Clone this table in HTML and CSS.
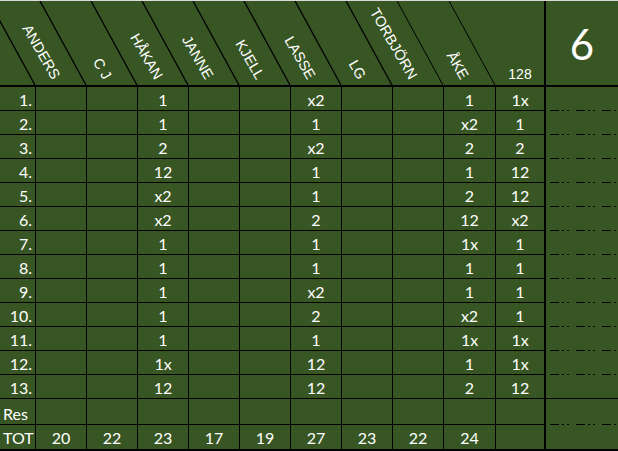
FILE: index.html
```html
<!DOCTYPE html>
<html>
<head>
<meta charset="utf-8">
<link rel="stylesheet" href="styles.css">
</head>
<body>
<div class="sheet">
  <div class="head">
    <div class="hc blank"></div>
    <div class="hc"><span class="anc"><span class="nm">ANDERS</span></span></div>
    <div class="hc"><span class="anc"><span class="nm">C J</span></span></div>
    <div class="hc"><span class="anc"><span class="nm">HÅKAN</span></span></div>
    <div class="hc"><span class="anc"><span class="nm">JANNE</span></span></div>
    <div class="hc"><span class="anc"><span class="nm">KJELL</span></span></div>
    <div class="hc"><span class="anc"><span class="nm">LASSE</span></span></div>
    <div class="hc"><span class="anc"><span class="nm">LG</span></span></div>
    <div class="hc"><span class="anc"><span class="nm">TORBJÖRN</span></span></div>
    <div class="hc"><span class="anc"><span class="nm">ÅKE</span></span></div>
    <div class="hc h128">128</div>
    <div class="hc round">6</div>
    <svg class="diag" width="618" height="85" viewBox="0 0 618 85">
      <g stroke="#000" stroke-width="1.3">
        <line x1="35.5" y1="85" x2="-11.5" y2="-1"/>
        <line x1="86.5" y1="85" x2="39.5" y2="-1"/>
        <line x1="137.5" y1="85" x2="90.5" y2="-1"/>
        <line x1="188.5" y1="85" x2="141.5" y2="-1"/>
        <line x1="239.5" y1="85" x2="192.5" y2="-1"/>
        <line x1="290.5" y1="85" x2="243.5" y2="-1"/>
        <line x1="341.5" y1="85" x2="294.5" y2="-1"/>
        <line x1="392.5" y1="85" x2="345.5" y2="-1"/>
      </g>
      <g stroke="#000" stroke-width="1">
        <line x1="443.5" y1="85" x2="396.5" y2="-1"/>
        <line x1="495.5" y1="85" x2="448.5" y2="-1"/>
      </g>
    </svg>
  </div>

  <div class="row"><div class="lab">1.</div><div></div><div></div><div>1</div><div></div><div></div><div>x2</div><div></div><div></div><div>1</div><div class="c128">1x</div><div class="last dd"></div></div>
  <div class="row"><div class="lab">2.</div><div></div><div></div><div>1</div><div></div><div></div><div>1</div><div></div><div></div><div>x2</div><div class="c128">1</div><div class="last dd"></div></div>
  <div class="row"><div class="lab">3.</div><div></div><div></div><div>2</div><div></div><div></div><div>x2</div><div></div><div></div><div>2</div><div class="c128">2</div><div class="last dd"></div></div>
  <div class="row"><div class="lab">4.</div><div></div><div></div><div>12</div><div></div><div></div><div>1</div><div></div><div></div><div>1</div><div class="c128">12</div><div class="last dd"></div></div>
  <div class="row"><div class="lab">5.</div><div></div><div></div><div>x2</div><div></div><div></div><div>1</div><div></div><div></div><div>2</div><div class="c128">12</div><div class="last dd"></div></div>
  <div class="row"><div class="lab">6.</div><div></div><div></div><div>x2</div><div></div><div></div><div>2</div><div></div><div></div><div>12</div><div class="c128">x2</div><div class="last dd"></div></div>
  <div class="row"><div class="lab">7.</div><div></div><div></div><div>1</div><div></div><div></div><div>1</div><div></div><div></div><div>1x</div><div class="c128">1</div><div class="last dd"></div></div>
  <div class="row"><div class="lab">8.</div><div></div><div></div><div>1</div><div></div><div></div><div>1</div><div></div><div></div><div>1</div><div class="c128">1</div><div class="last dd"></div></div>
  <div class="row"><div class="lab">9.</div><div></div><div></div><div>1</div><div></div><div></div><div>x2</div><div></div><div></div><div>1</div><div class="c128">1</div><div class="last dd"></div></div>
  <div class="row"><div class="lab">10.</div><div></div><div></div><div>1</div><div></div><div></div><div>2</div><div></div><div></div><div>x2</div><div class="c128">1</div><div class="last dd"></div></div>
  <div class="row"><div class="lab">11.</div><div></div><div></div><div>1</div><div></div><div></div><div>1</div><div></div><div></div><div>1x</div><div class="c128">1x</div><div class="last dd"></div></div>
  <div class="row"><div class="lab">12.</div><div></div><div></div><div>1x</div><div></div><div></div><div>12</div><div></div><div></div><div>1</div><div class="c128">1x</div><div class="last dd"></div></div>
  <div class="row"><div class="lab">13.</div><div></div><div></div><div>12</div><div></div><div></div><div>12</div><div></div><div></div><div>2</div><div class="c128">12</div><div class="last"></div></div>
  <div class="row res"><div class="lab l">Res</div><div></div><div></div><div></div><div></div><div></div><div></div><div></div><div></div><div></div><div class="c128"></div><div class="last dd"></div></div>
  <div class="row tot"><div class="lab l">TOT</div><div>20</div><div>22</div><div>23</div><div>17</div><div>19</div><div>27</div><div>23</div><div>22</div><div>24</div><div class="c128"></div><div class="last"></div></div>
</div>
</body>
</html>
```

FILE: styles.css
```css
html, body {
  margin: 0;
  padding: 0;
  background: #375623;
}

.sheet {
  width: 618px;
  height: 451px;
  box-sizing: border-box;
  border-top: 1px solid #d9d9d9;
  background: #375623;
  color: #ffffff;
  font-family: Lato, "Open Sans", sans-serif;
  font-size: 16px;
  overflow: hidden;
}

.head {
  position: relative;
  display: grid;
  grid-template-columns: 36px repeat(8, 51px) 52px 50px 72px;
  height: 86px;
  box-sizing: border-box;
  border-bottom: 2px solid #000;
}

.hc {
  display: flex;
  align-items: flex-end;
  justify-content: center;
  min-width: 0;
}

.anc {
  display: flex;
  justify-content: flex-end;
  width: 0;
  height: 14px;
  margin-right: 10px;
}

.nm {
  display: block;
  white-space: nowrap;
  font-family: "Liberation Sans", Arial, sans-serif;
  font-size: 14.5px;
  line-height: 14px;
  transform: rotate(60deg);
  transform-origin: 100% 50%;
}

.h128 {
  box-sizing: border-box;
  border-right: 2px solid #000;
  font-family: "Liberation Sans", Arial, sans-serif;
  font-size: 14px;
  line-height: 14px;
  padding-bottom: 4px;
}

.round {
  align-items: center;
  font-family: Lato, "Open Sans", sans-serif;
  font-size: 42px;
  line-height: 1;
  padding-top: 2px;
}

.diag {
  position: absolute;
  left: 0;
  top: 0;
  pointer-events: none;
}

.row {
  display: grid;
  grid-template-columns: 36px repeat(8, 51px) 52px 50px 72px;
  height: 24px;
}

.row.res {
  height: 26px;
}

.row.tot {
  height: 26px;
}

.row > div {
  box-sizing: border-box;
  border-right: 1px solid #000;
  border-bottom: 1px solid #000;
  display: flex;
  align-items: flex-end;
  justify-content: center;
  line-height: 20px;
}

.row.tot > div {
  border-bottom: 2px solid #000;
  line-height: 22px;
}

.row > .c128 {
  border-right: 2px solid #000;
}

.row > .last {
  border-right: none;
}

.row > .dd {
  border-bottom: none;
  background-image: repeating-linear-gradient(to right,
    transparent 0 4px,
    #000 4px 13px,
    transparent 13px 16px,
    #000 16px 18px,
    transparent 18px 21px,
    #000 21px 23px,
    transparent 23px 26px);
  background-size: 100% 1px;
  background-position: left bottom;
  background-repeat: no-repeat;
}

.row > .lab {
  justify-content: flex-end;
  padding-right: 3px;
}

.row > .lab.l {
  justify-content: flex-start;
  padding-left: 3px;
  padding-right: 0;
}
```
